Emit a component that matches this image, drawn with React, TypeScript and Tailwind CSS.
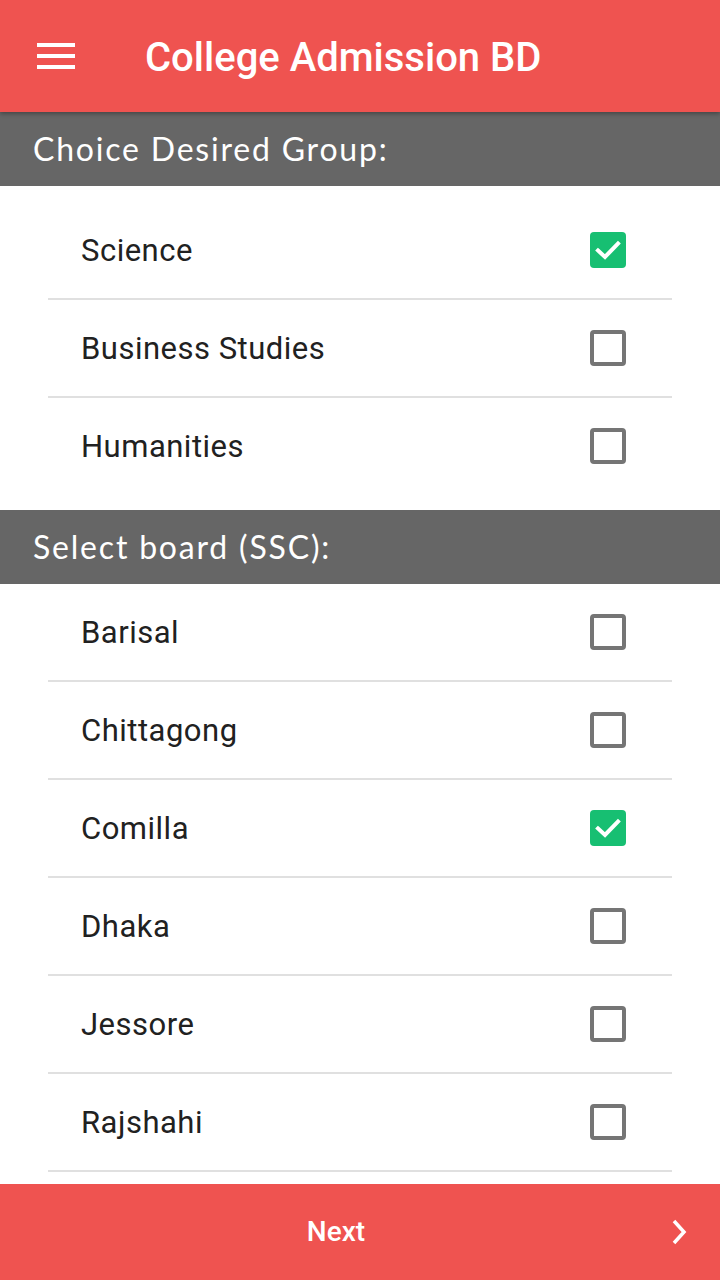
import React, { useState } from "react";

const groups = ["Science", "Business Studies", "Humanities"];
const boards = ["Barisal", "Chittagong", "Comilla", "Dhaka", "Jessore", "Rajshahi"];

function Check({ checked }: { checked: boolean }) {
  if (checked) {
    return (
      <div className="w-[36px] h-[36px] rounded-[4px] bg-[#17bf72] flex items-center justify-center">
        <svg width="28" height="28" viewBox="0 0 28 28">
          <path d="M4 14.5 L11 21 L24 7.5" fill="none" stroke="#fff" strokeWidth="4" strokeLinecap="square" strokeLinejoin="miter" />
        </svg>
      </div>
    );
  }
  return <div className="w-[36px] h-[36px] rounded-[4px] border-[4px] border-[#757575] bg-white" />;
}

function Row({ label, checked, last, onClick }: { label: string; checked: boolean; last?: boolean; onClick: () => void }) {
  return (
    <div className={last ? "mx-[48px]" : "mx-[48px] border-b-2 border-[#e0e0e0]"} onClick={onClick}>
      <div className="h-[96px] flex items-center justify-between pl-[33px] pr-[46px]">
        <span className="text-[31px] tracking-[0.5px] text-[#212121] pt-[3px]" style={{ fontFamily: "Roboto, 'Liberation Sans', sans-serif" }}>
          {label}
        </span>
        <Check checked={checked} />
      </div>
    </div>
  );
}

function SectionHeader({ title }: { title: string }) {
  return (
    <div className="h-[74px] bg-[#666666] flex items-center pl-[33px]">
      <span className="text-white text-[32px] tracking-[1.8px]" style={{ fontFamily: "Lato, 'DejaVu Sans', sans-serif" }}>
        {title}
      </span>
    </div>
  );
}

export default function App() {
  const [group, setGroup] = useState("Science");
  const [board, setBoard] = useState<Record<string, boolean>>({ Comilla: true });

  return (
    <div className="w-[720px] h-[1280px] flex flex-col bg-white overflow-hidden" style={{ fontFamily: "Roboto, 'Liberation Sans', sans-serif" }}>
      <div className="h-[112px] bg-[#ef5350] flex items-center shrink-0 relative z-10 shadow-[0_2px_4px_rgba(0,0,0,0.3)]">
        <div className="w-[145px] flex items-center pl-[37px]">
          <div className="flex flex-col gap-[7px]">
            <div className="w-[38px] h-[4px] bg-white" />
            <div className="w-[38px] h-[4px] bg-white" />
            <div className="w-[38px] h-[4px] bg-white" />
          </div>
        </div>
        <span className="text-white text-[40px] font-medium pt-[4px]">College Admission BD</span>
      </div>

      <div className="flex-1 overflow-hidden">
        <SectionHeader title="Choice Desired Group:" />
        <div className="pt-[16px] pb-[16px]">
          {groups.map((g, i) => (
            <Row key={g} label={g} checked={group === g} last={i === groups.length - 1} onClick={() => setGroup(g)} />
          ))}
        </div>
        <SectionHeader title="Select board (SSC):" />
        <div>
          {boards.map((b) => (
            <Row key={b} label={b} checked={!!board[b]} onClick={() => setBoard({ ...board, [b]: !board[b] })} />
          ))}
        </div>
      </div>

      <div className="h-[96px] bg-[#ef5350] flex items-center shrink-0">
        <div className="w-[672px] text-center text-white text-[28px] font-medium">Next</div>
        <svg width="18" height="28" viewBox="0 0 18 28" className="ml-[-1px]">
          <path d="M3 3 L13 14 L3 25" fill="none" stroke="#fff" strokeWidth="3.5" />
        </svg>
      </div>
    </div>
  );
}
